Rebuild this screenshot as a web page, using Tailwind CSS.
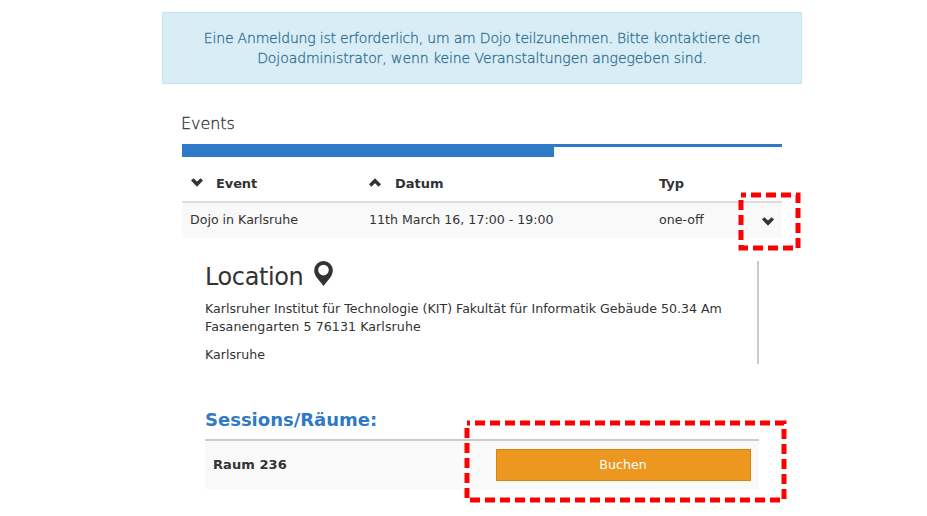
<!DOCTYPE html>
<html lang="de">
<head>
<meta charset="utf-8">
<title>Events</title>
<script src="https://cdn.jsdelivr.net/npm/@tailwindcss/browser@4"></script>
</head>
<body class="relative h-[516px] overflow-hidden bg-white pl-[162px] pt-3 font-['DejaVu_Sans',sans-serif] text-[12.6px] leading-[18px] text-[#333]">
<main class="w-[640px]">
  <div class="h-[72px] border border-[#bce8f1] bg-[#d9edf7] pt-[15px] text-center font-['DejaVu_Sans_Light','DejaVu_Sans',sans-serif] text-[14px] font-extralight leading-5 text-[#31708f] [-webkit-text-stroke:0.3px_#31708f]"><span class="tracking-[-0.19px]">Eine Anmeldung ist erforderlich, um am Dojo teilzunehmen. Bitte kontaktiere den</span><br><span class="tracking-[-0.08px]">Dojoadministrator, wenn keine Veranstaltungen angegeben sind.</span></div>

  <section class="mt-[28px] ml-5 w-[600px]">
    <h2 class="-ml-px h-8 pt-px font-['DejaVu_Sans_Light','DejaVu_Sans',sans-serif] text-[16px] font-extralight leading-[22px] tracking-[-0.05px] [-webkit-text-stroke:0.3px_#333]">Events</h2>
    <div class="h-[13px] border-t-[3px] border-[#2f7ac7]"><div class="h-[10px] w-[372px] bg-[#2f7ac7]"></div></div>

    <div class="grid h-[46px] grid-cols-[179px_290px_1fr] border-b-2 border-[#ddd] pt-[18px] text-[13px] font-bold">
      <div class="flex gap-[13px] pl-[9px]"><svg class="mt-[3px] h-[9px] w-3" viewBox="0 0 12 9"><path d="M0 2.600 2.400.2 6 3.600 9.600.2 12 2.600 6 8.700z" fill="#333"/></svg><span class="-tracking-[0.1px]">Event</span></div>
      <div class="flex gap-[14px] pl-2"><svg class="mt-[3px] h-[9px] w-3" viewBox="0 0 12 9"><path d="M0 6.300 6 .2l6 6.100-2.400 2.400L6 5.300 2.400 8.700z" fill="#333"/></svg><span>Datum</span></div>
      <div class="pl-2">Typ</div>
    </div>
    <div class="grid h-[35px] grid-cols-[179px_290px_1fr_20px] bg-[#f9f9f9] pt-2">
      <div class="pl-2">Dojo in Karlsruhe</div>
      <div class="pl-2">11th March 16, 17:00 - 19:00</div>
      <div class="pl-2">one-off</div>
      <svg class="mt-[6px] h-[9px] w-3" viewBox="0 0 12 9"><path d="M0 2.600 2.400.2 6 3.600 9.600.2 12 2.600 6 8.700z" fill="#333"/></svg>
    </div>

    <div class="ml-[23px] mt-[23px] w-[554px]">
      <div class="h-[103px] border-r-2 border-[#ccc]">
        <h3 class="flex h-[39px] gap-[11px] text-[24px] leading-8"><span class="tracking-[-0.4px]">Location</span><svg class="h-[25px] w-[19px]" viewBox="0 0 19 25"><path fill-rule="evenodd" d="M9.500 0a9.300 9.300 0 0 1 9.300 9.300c0 2.700-1 4.900-2.300 7L9.500 25l-7-8.700C1.200 14.200.2 12 .2 9.300A9.300 9.300 0 0 1 9.500 0zm0 3.800a5.300 5.300 0 1 0 0 10.600 5.300 5.300 0 0 0 0-10.600z" fill="#333"/></svg></h3>
        <p>Karlsruher Institut für Technologie (KIT) Fakultät für Informatik Gebäude 50.34 Am<br><span class="tracking-[0.08px]">Fasanengarten 5 76131 Karlsruhe</span></p>
        <p class="mt-[10px]">Karlsruhe</p>
      </div>
      <h3 class="mt-[43px] h-8 text-[18px] font-bold leading-[25px] text-[#2f7ac7]">Sessions/Räume:</h3>
      <div class="flex h-[50px] items-start justify-between border-t-2 border-[#ccc] bg-[#f9f9f9] px-2 pt-2">
        <strong class="pt-[7px] text-[13px] tracking-[0.07px]">Raum 236</strong>
        <button class="h-8 w-[255px] border border-[#d58512] bg-[#ec971f] pr-px text-[12.6px] text-white">Buchen</button>
      </div>
    </div>
  </section>
</main>
<svg class="pointer-events-none absolute left-0 top-0" width="927" height="516" fill="none" stroke="#f00" stroke-width="5" stroke-dasharray="10 5">
  <path stroke-dashoffset="5" d="M741 195H798V248H741Z"/>
  <path stroke-dashoffset="7" d="M467 423H784V500H467Z"/>
</svg>
</body>
</html>
